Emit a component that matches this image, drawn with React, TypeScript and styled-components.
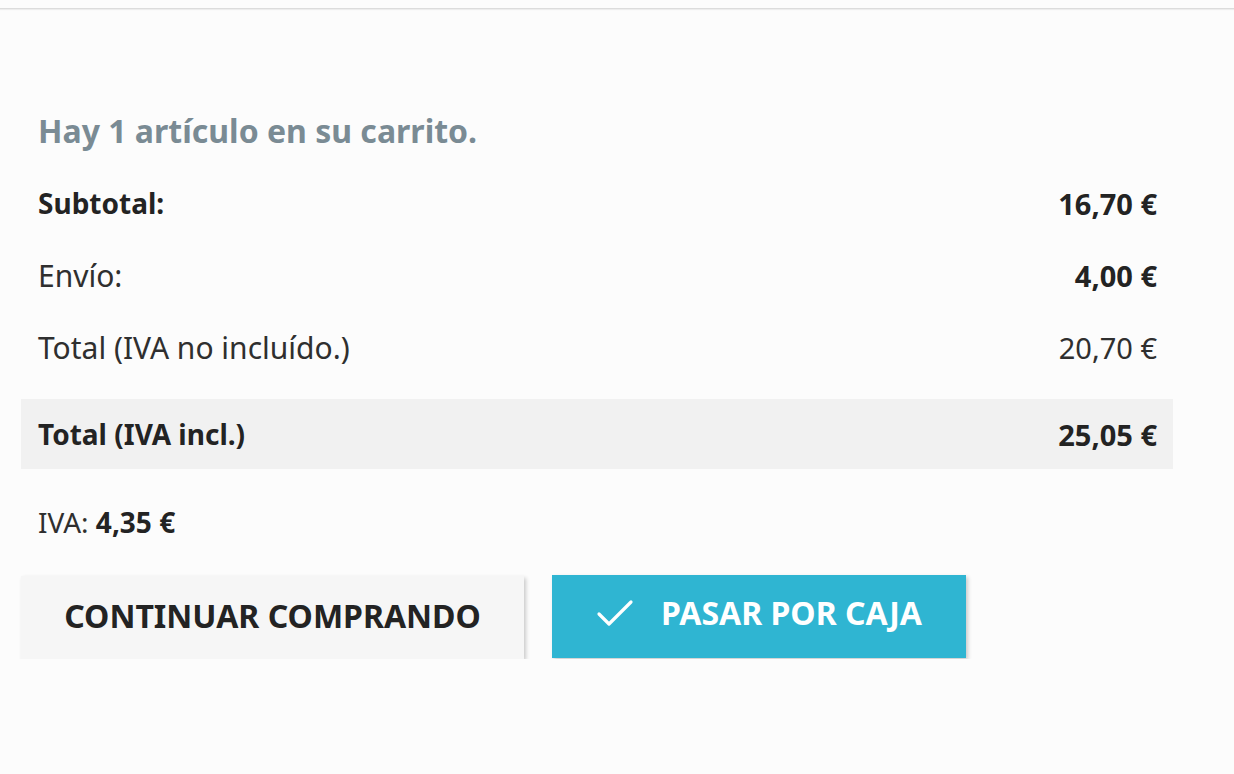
import React from "react";
import styled, { createGlobalStyle } from "styled-components";

const GlobalStyle = createGlobalStyle`
  html, body {
    margin: 0;
    padding: 0;
    background: #fcfcfc;
    font-family: "Noto Sans", "Open Sans", sans-serif;
    color: #232323;
  }
`;

const TopBar = styled.div`
  height: 8px;
  border-bottom: 1px solid #dcdcdc;
  box-shadow: 0 1px 1px rgba(0, 0, 0, 0.06);
  background: #fcfcfc;
`;

const Summary = styled.section`
  width: 1152px;
  margin-left: 21px;
  padding-top: 102px;
`;

const Heading = styled.h1`
  margin: 0 0 16px 17px;
  font-size: 32px;
  line-height: 40px;
  font-weight: 700;
  color: #7a8b94;
`;

const Line = styled.div<{ $highlight?: boolean }>`
  display: flex;
  justify-content: space-between;
  align-items: center;
  height: ${(p) => (p.$highlight ? "70px" : "72px")};
  padding: 0 16px 0 17px;
  font-size: 29px;
  background: ${(p) => (p.$highlight ? "#f1f1f1" : "transparent")};
  margin-top: ${(p) => (p.$highlight ? "16px" : "0")};
`;

const Label = styled.span<{ $bold?: boolean }>`
  font-weight: ${(p) => (p.$bold ? 700 : 400)};
  font-size: ${(p) => (p.$bold ? "28px" : "30px")};
  color: ${(p) => (p.$bold ? "#232323" : "#2f2f2f")};
`;

const Amount = styled.span<{ $bold?: boolean }>`
  font-weight: ${(p) => (p.$bold ? 700 : 400)};
  color: ${(p) => (p.$bold ? "#232323" : "#2f2f2f")};
`;

const Tax = styled.p`
  margin: 0;
  padding: 36px 17px 0;
  font-size: 28px;
  line-height: 34px;
  color: #2f2f2f;

  strong {
    font-weight: 700;
    color: #232323;
  }
`;

const Actions = styled.div`
  display: flex;
  align-items: flex-start;
  gap: 28px;
  margin-top: 36px;
`;

const Button = styled.button<{ $primary?: boolean }>`
  display: flex;
  align-items: center;
  justify-content: center;
  gap: 27px;
  height: 83px;
  border: none;
  font-family: "Noto Sans", "Open Sans", sans-serif;
  font-size: 32px;
  font-weight: 700;
  text-transform: uppercase;
  cursor: pointer;
  box-shadow: 2px 2px 4px rgba(0, 0, 0, 0.2);
  background: ${(p) => (p.$primary ? "#2fb5d2" : "#f6f6f6")};
  color: ${(p) => (p.$primary ? "#ffffff" : "#232323")};
  width: ${(p) => (p.$primary ? "414px" : "503px")};
  margin-top: ${(p) => (p.$primary ? "0" : "1px")};
  padding: ${(p) => (p.$primary ? "0 0 8px 0" : "0 0 4px 0")};
`;

const CheckIcon = () => (
  <svg width="38" height="30" viewBox="0 0 38 30" fill="none">
    <path
      d="M3 16 L13 26 L35 4"
      stroke="#ffffff"
      strokeWidth="3.2"
      strokeLinecap="round"
      strokeLinejoin="round"
    />
  </svg>
);

const App: React.FC = () => {
  return (
    <>
      <GlobalStyle />
      <TopBar />
      <Summary>
        <Heading>Hay 1 artículo en su carrito.</Heading>
        <Line>
          <Label $bold>Subtotal:</Label>
          <Amount $bold>16,70 €</Amount>
        </Line>
        <Line>
          <Label>Envío:</Label>
          <Amount $bold>4,00 €</Amount>
        </Line>
        <Line>
          <Label>Total (IVA no incluído.)</Label>
          <Amount>20,70 €</Amount>
        </Line>
        <Line $highlight>
          <Label $bold>Total (IVA incl.)</Label>
          <Amount $bold>25,05 €</Amount>
        </Line>
        <Tax>
          IVA: <strong>4,35 €</strong>
        </Tax>
        <Actions>
          <Button>Continuar comprando</Button>
          <Button $primary>
            <CheckIcon />
            Pasar por caja
          </Button>
        </Actions>
      </Summary>
    </>
  );
};

export default App;
